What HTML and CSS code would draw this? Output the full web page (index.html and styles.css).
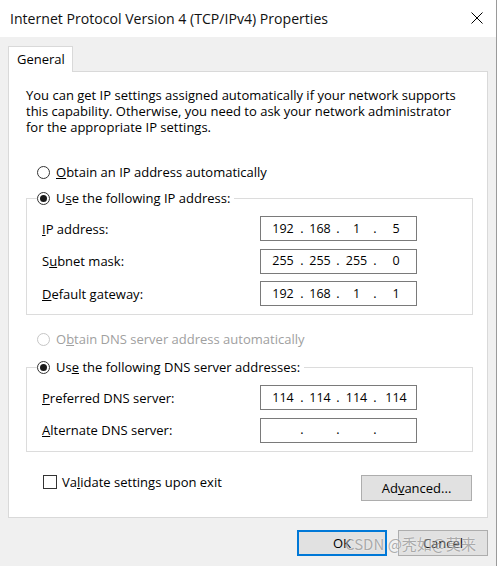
FILE: index.html
```html
<!DOCTYPE html>
<html>
<head>
<meta charset="utf-8">
<link rel="stylesheet" href="styles.css">
</head>
<body>
<div class="window">
  <div class="titlebar">
    <span class="title">Internet Protocol Version 4 (TCP/IPv4) Properties</span>
    <svg class="close" width="12" height="12" viewBox="0 0 12 12"><path d="M0.5 0.5L11.5 11.5M11.5 0.5L0.5 11.5" stroke="#000" stroke-width="1" fill="none"/></svg>
  </div>
  <div class="main">
    <div class="tabs"><div class="tab">General</div></div>
    <div class="panel">
      <p class="intro"><span class="line">You can get IP settings assigned automatically if your network supports</span><span class="line">this capability. Otherwise, you need to ask your network administrator</span><span class="line">for the appropriate IP settings.</span></p>

      <div class="option opt-ip-auto"><span class="radio"></span><span><u>O</u>btain an IP address automatically</span></div>

      <div class="group group-ip">
        <div class="legend"><span class="radio checked"></span><span>U<u>s</u>e the following IP address:</span></div>
        <div class="fields">
          <div class="field"><span class="label"><u>I</u>P address:</span>
            <div class="ip"><span>192</span><span class="dot">.</span><span>168</span><span class="dot">.</span><span>1</span><span class="dot">.</span><span>5</span></div></div>
          <div class="field"><span class="label">S<u>u</u>bnet mask:</span>
            <div class="ip"><span>255</span><span class="dot">.</span><span>255</span><span class="dot">.</span><span>255</span><span class="dot">.</span><span>0</span></div></div>
          <div class="field"><span class="label"><u>D</u>efault gateway:</span>
            <div class="ip"><span>192</span><span class="dot">.</span><span>168</span><span class="dot">.</span><span>1</span><span class="dot">.</span><span>1</span></div></div>
        </div>
      </div>

      <div class="option opt-dns-auto disabled"><span class="radio"></span><span>O<u>b</u>tain DNS server address automatically</span></div>

      <div class="group group-dns">
        <div class="legend"><span class="radio checked"></span><span>Us<u>e</u> the following DNS server addresses:</span></div>
        <div class="fields">
          <div class="field"><span class="label"><u>P</u>referred DNS server:</span>
            <div class="ip"><span>114</span><span class="dot">.</span><span>114</span><span class="dot">.</span><span>114</span><span class="dot">.</span><span>114</span></div></div>
          <div class="field"><span class="label"><u>A</u>lternate DNS server:</span>
            <div class="ip"><span></span><span class="dot">.</span><span></span><span class="dot">.</span><span></span><span class="dot">.</span><span></span></div></div>
        </div>
      </div>

      <div class="bottom-row">
        <div class="check-row"><span class="checkbox"></span><span>Va<u>l</u>idate settings upon exit</span></div>
        <button class="btn btn-adv">Ad<u>v</u>anced...</button>
      </div>
    </div>
    <div class="buttons">
      <button class="btn btn-ok">OK</button>
      <button class="btn">Cancel</button>
      <span class="watermark">CSDN @秃如@莫来</span>
    </div>
  </div>
</div>
</body>
</html>
```

FILE: styles.css
```css
html, body {
  margin: 0;
  padding: 0;
  background: #ffffff;
}
body {
  font-family: "Open Sans", "Noto Sans", sans-serif;
  font-size: 13px;
  color: #000;
}
.window {
  width: 497px;
  height: 566px;
  box-sizing: border-box;
  border-right: 1px solid #9a9a9a;
  background: #f0f0f0;
  overflow: hidden;
}
.titlebar {
  height: 37px;
  background: #fff;
  display: flex;
  align-items: center;
  justify-content: space-between;
  padding: 0 13px 1px 10px;
  box-sizing: border-box;
}
.title {
  font-size: 14.1px;
  color: #111;
}
.close {
  display: block;
}
.main {
  padding: 9px 8px 0 8px;
  position: relative;
}
.tabs {
  display: flex;
}
.tab {
  position: relative;
  z-index: 1;
  height: 26px;
  width: 65px;
  box-sizing: border-box;
  background: #fff;
  border: 1px solid #d9d9d9;
  border-bottom: none;
  margin-bottom: -1px;
  padding-left: 8px;
  line-height: 24px;
}
.panel {
  background: #fff;
  border: 1px solid #d9d9d9;
  padding: 15px 0 16px 0;
}
.intro {
  margin: 0;
  padding-left: 17px;
  display: flex;
  flex-direction: column;
}
.intro .line {
  display: block;
  height: 16px;
  line-height: 16px;
  white-space: nowrap;
}
.option, .legend, .check-row {
  display: flex;
  align-items: center;
  gap: 6px;
  line-height: 16px;
  height: 16px;
}
.option {
  padding-left: 28px;
}
.opt-ip-auto {
  margin-top: 29px;
}
.opt-dns-auto {
  margin-top: 16px;
}
.disabled {
  color: #a0a0a0;
}
.radio {
  width: 13px;
  height: 13px;
  box-sizing: border-box;
  border: 1px solid #333;
  border-radius: 50%;
  background: #fff;
  display: flex;
  align-items: center;
  justify-content: center;
  flex: none;
}
.radio.checked::after {
  content: "";
  width: 7px;
  height: 7px;
  border-radius: 50%;
  background: #1a1a1a;
}
.disabled .radio {
  border-color: #c6c6c6;
}
.group {
  border: 1px solid #dcdcdc;
  margin: 0 14px 0 17px;
  padding: 0 0 8px 0;
}
.group-ip {
  margin-top: 18px;
}
.group-dns {
  margin-top: 20px;
}
.legend {
  margin-top: -9px;
  margin-left: 10px;
  padding-right: 4px;
  background: #fff;
  width: max-content;
}
.fields {
  margin-top: 10px;
  display: flex;
  flex-direction: column;
  gap: 7.5px;
}
.field {
  display: flex;
  align-items: center;
  padding-left: 15px;
  height: 25px;
}
.label {
  width: 218px;
}
.ip {
  width: 157px;
  height: 25px;
  box-sizing: border-box;
  border: 1px solid #7a7a7a;
  background: #fff;
  display: grid;
  grid-template-columns: 32px 6px 30px 6px 31px 6px 36px;
  padding-left: 6px;
  align-items: center;
  text-align: center;
  font-size: 12.5px;
  line-height: 22px;
}
.dot {
  text-align: center;
}
.bottom-row {
  display: flex;
  justify-content: space-between;
  align-items: flex-start;
  margin: 23px 15px 0 0;
}
.check-row {
  padding-left: 34px;
  gap: 5px;
  margin-top: -1px;
}
.checkbox {
  width: 14px;
  height: 14px;
  box-sizing: border-box;
  border: 1px solid #333;
  background: #fff;
  flex: none;
}
.btn {
  font-family: inherit;
  font-size: 13px;
  color: #000;
  background: #e1e1e1;
  border: 1px solid #adadad;
  width: 90px;
  height: 26px;
  padding: 0;
  margin: 0;
}
.btn-adv {
  width: 111px;
}
.btn-ok {
  border: 2px solid #0078d7;
}
.buttons {
  display: flex;
  justify-content: flex-end;
  gap: 11px;
  margin-top: 12px;
  position: relative;
}
.watermark {
  position: absolute;
  left: 337px;
  top: 4px;
  font-family: "Noto Sans CJK SC", sans-serif;
  font-size: 15px;
  line-height: 20px;
  color: rgba(110, 110, 110, 0.55);
  text-shadow: 0 0 2px rgba(255,255,255,0.8);
  white-space: nowrap;
  pointer-events: none;
}
```
